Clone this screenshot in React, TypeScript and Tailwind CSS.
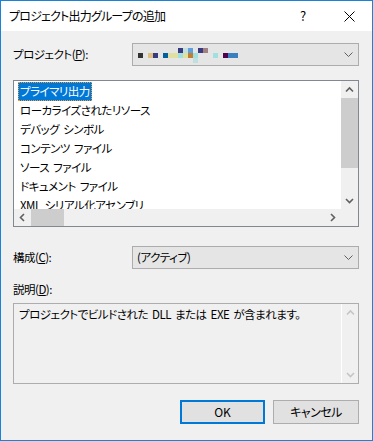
import React from 'react';

const FONT = "font-['Noto_Sans_CJK_JP',sans-serif] [font-feature-settings:'palt']";

const items = [
  'プライマリ出力',
  'ローカライズされたリソース',
  'デバッグ シンボル',
  'コンテンツ ファイル',
  'ソース ファイル',
  'ドキュメント ファイル',
  'XML シリアル化アセンブリ',
];

// mosaic that hides the project name
const mosaic: [number, number, number, string][] = [
  [40, 0, 5, '#3a3a80'],
  [45, 0, 5, '#c0e0e0'],
  [50, 0, 5, '#60a0e0'],
  [60, 0, 5, '#3a3a80'],
  [65, 0, 5, '#a08080'],
  [0, 5, 5, '#333333'],
  [10, 5, 5, '#e0c080'],
  [15, 5, 5, '#3a3a80'],
  [25, 5, 5, '#0060a0'],
  [30, 5, 10, '#e0e0a0'],
  [40, 5, 5, '#a0e0e0'],
  [45, 5, 5, '#e0e0a0'],
  [50, 5, 5, '#c08030'],
  [55, 5, 5, '#a0e0e0'],
  [75, 5, 5, '#a0e0e0'],
  [85, 5, 5, '#500050'],
  [90, 5, 10, '#3a80c0'],
  [55, 10, 5, '#c0e0e0'],
];

const Chevron: React.FC<{ dir: 'up' | 'down' | 'left' | 'right'; color?: string; size?: number }> = ({
  dir,
  color = '#606060',
  size = 9,
}) => {
  const pts = {
    down: '1,3 4.5,6.5 8,3',
    up: '1,6.5 4.5,3 8,6.5',
    left: '6,1 2.5,4.5 6,8',
    right: '3,1 6.5,4.5 3,8',
  }[dir];
  return (
    <svg width={size} height={size} viewBox="0 0 9 9">
      <polyline points={pts} fill="none" stroke={color} strokeWidth="1.6" />
    </svg>
  );
};

const ComboBox: React.FC<{ children: React.ReactNode }> = ({ children }) => (
  <div className="flex-1 h-[23px] bg-[#e5e5e5] border border-[#acacac] flex items-center pl-[4px] pr-[5px]">
    <div className="flex-1 flex items-center">{children}</div>
    <svg width="9" height="5" viewBox="0 0 9 5">
      <polyline points="0.5,0.5 4.5,4.5 8.5,0.5" fill="none" stroke="#606060" strokeWidth="1" />
    </svg>
  </div>
);

export default function App() {
  return (
    <div className={`w-[373px] h-[441px] border border-[#1883d7] bg-[#f0f0f0] flex flex-col text-[12px] text-black ${FONT}`}>
      {/* title bar */}
      <div className="h-[30px] bg-white flex items-center pl-[8px] shrink-0">
        <span className="flex-1 tracking-[-0.8px]">プロジェクト出力グループの追加</span>
        <span className="w-[46px] text-center text-[13px]">?</span>
        <div className="w-[46px] flex justify-center">
          <svg width="11" height="11" viewBox="0 0 11 11">
            <path d="M0.5 0.5 L10.5 10.5 M10.5 0.5 L0.5 10.5" stroke="#000" strokeWidth="1" />
          </svg>
        </div>
      </div>

      <div className="flex flex-col pl-[12px] pr-[13px] text-[11.5px] tracking-[-0.5px] [word-spacing:2px]">
        {/* project */}
        <div className="flex items-center mt-[12px]">
          <span className="w-[119px]">
            プロジェクト(<span className="underline">P</span>):
          </span>
          <ComboBox>
            <svg width="100" height="15" viewBox="0 0 100 15" className="ml-[1px] mt-[1px]">
              {mosaic.map(([x, y, w, c], i) => (
                <rect key={i} x={x} y={y} width={w} height={5} fill={c} />
              ))}
            </svg>
          </ComboBox>
        </div>

        {/* list box */}
        <div className="mt-[14px] h-[147px] border border-[#828790] flex flex-col">
          <div className="flex flex-1 min-h-0">
            <div className="flex-1 bg-white pl-[4px] pt-[1px] overflow-hidden">
              {items.map((it, i) => (
                <div key={it} className="h-[19px] flex items-center">
                  <span
                    className={
                      i === 0
                        ? 'bg-[#0078d7] text-white px-[2px] h-[19px] flex items-center outline outline-1 outline-dotted outline-[#f0a030] -outline-offset-1'
                        : 'px-[2px] whitespace-nowrap'
                    }
                  >
                    {it}
                  </span>
                </div>
              ))}
            </div>
            <div className="w-[17px] bg-[#f0f0f0] flex flex-col items-center">
              <div className="h-[17px] flex items-center justify-center">
                <Chevron dir="up" />
              </div>
              <div className="w-full h-[70px] bg-[#cdcdcd]" />
              <div className="flex-1" />
              <div className="h-[17px] flex items-center justify-center">
                <Chevron dir="down" />
              </div>
            </div>
          </div>
          <div className="h-[17px] flex bg-[#f0f0f0]">
            <div className="w-[17px] flex items-center justify-center">
              <Chevron dir="left" />
            </div>
            <div className="w-[33px] bg-[#cdcdcd]" />
            <div className="flex-1" />
            <div className="w-[17px] flex items-center justify-center">
              <Chevron dir="right" />
            </div>
            <div className="w-[17px]" />
          </div>
        </div>

        {/* configuration */}
        <div className="flex items-center mt-[19px]">
          <span className="w-[119px]">
            構成(<span className="underline">C</span>):
          </span>
          <ComboBox>
            <span>(アクティブ)</span>
          </ComboBox>
        </div>

        {/* description */}
        <div className="mt-[13px] h-[16px] flex items-center">
          説明(<span className="underline">D</span>):
        </div>
        <div className="mt-[5px] h-[81px] border border-[#adadad] flex">
          <div className="flex-1 pl-[5px] pt-[2px]">
            プロジェクトでビルドされた DLL または EXE が含まれます。
          </div>
          <div className="w-[17px] border-l border-white flex flex-col items-center justify-between py-[4px]">
            <Chevron dir="up" color="#c5c5c5" />
            <Chevron dir="down" color="#c5c5c5" />
          </div>
        </div>

        {/* buttons */}
        <div className="mt-[16px] flex justify-end gap-[8px] text-[12px] tracking-normal">
          <button className="w-[85px] h-[24px] bg-[#e1e1e1] border-2 border-[#0078d7] flex items-center justify-center">
            OK
          </button>
          <button className="w-[86px] h-[24px] bg-[#e1e1e1] border border-[#adadad] flex items-center justify-center tracking-[-0.5px]">
            キャンセル
          </button>
        </div>
      </div>
    </div>
  );
}
